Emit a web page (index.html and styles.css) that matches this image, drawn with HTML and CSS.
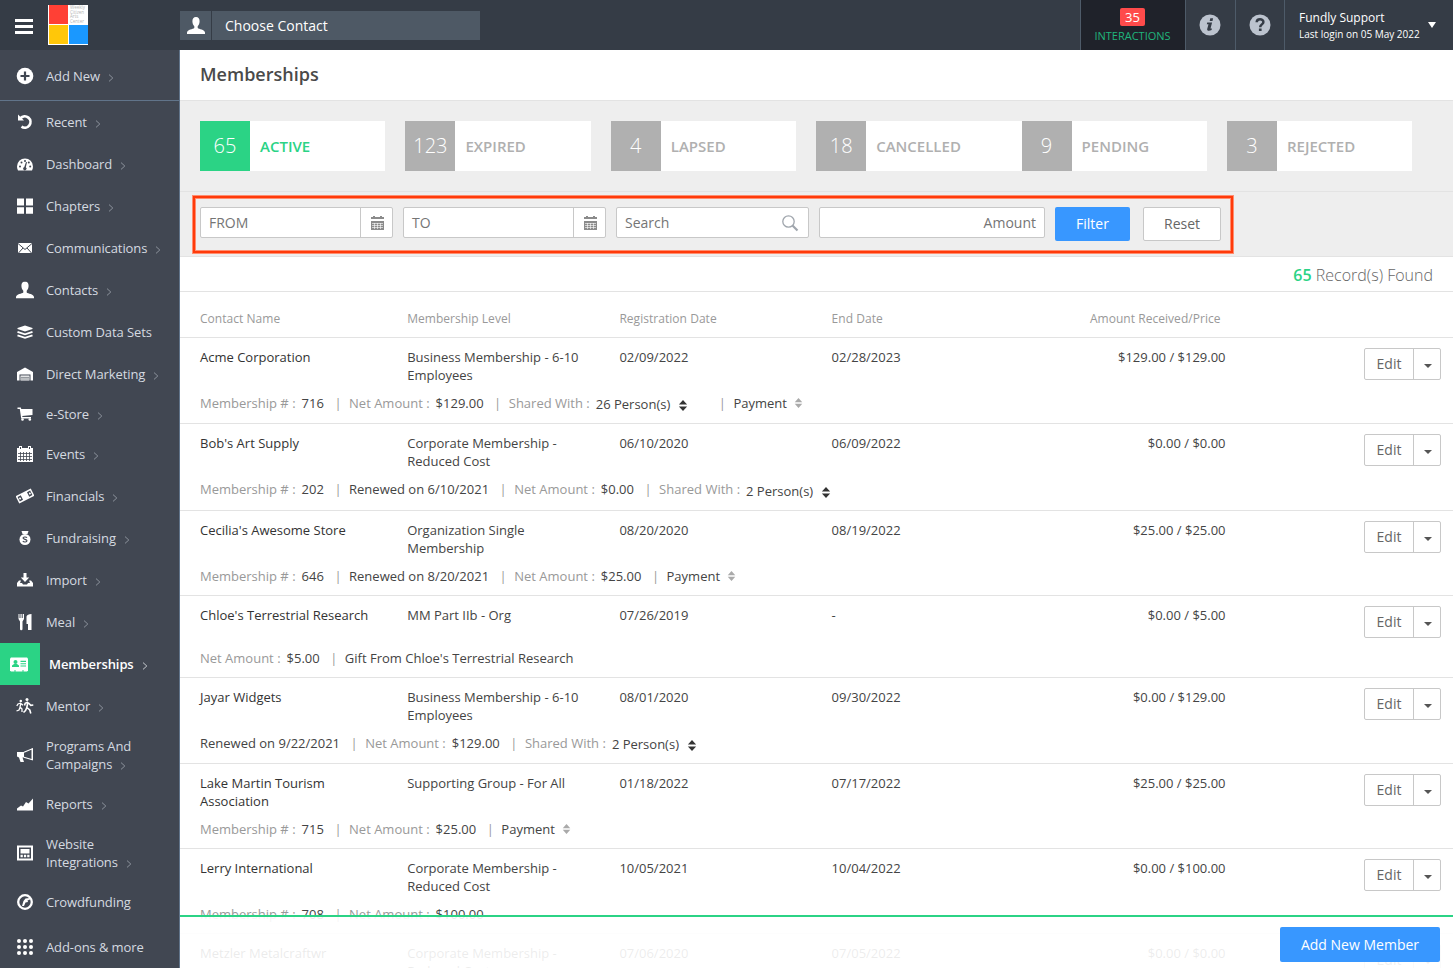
FILE: index.html
```html
<!DOCTYPE html>
<html lang="en">
<head>
    <meta charset="UTF-8">
    <meta name="viewport" content="width=device-width, initial-scale=1.0">
    <title>Memberships</title>
    <link rel="stylesheet" href="styles.css">
</head>
<body>
    <!-- shared icons -->
    <svg class="defs" width="0" height="0">
        <symbol id="person" viewBox="0 0 18 17"><path d="M9 0c2.500 0 3.600 1.700 3.600 4.200 0 2.200-.8 4-1.900 5v1.900c1.200 1.100 7 1.700 7.300 4.400V17H0v-1.500c.3-2.700 6.100-3.300 7.300-4.400V9.200C6.200 8.200 5.400 6.400 5.400 4.200 5.400 1.700 6.500 0 9 0z"/></symbol>
        <symbol id="arrow" viewBox="0 0 6 8"><path d="M1 .6L4.800 4 1 7.400" fill="none" stroke="currentColor"/></symbol>
        <symbol id="calendar" viewBox="0 0 13 14"><path d="M2 0h2v1h5V0h2v1h2v2H0V1h2zM0 5h13v9H0z"/><path d="M1 7.500h11M1 9.500h11M1 11.500h11M3.500 7v6M6.500 7v6M9.500 7v6" stroke="#fff" stroke-width=".6"/></symbol>
        <symbol id="sort" viewBox="0 0 10 12"><path d="M5 0l4.500 5h-9zM5 12L.5 7h9z"/></symbol>
    </svg>

    <header class="topbar">
        <div class="menu"><span></span><span></span><span></span></div>
        <div class="logo">
            <div class="red"></div>
            <div class="logo-text">Weekly<br>Citizen<br>Arts<br>Center</div>
            <div class="yellow"></div>
            <div class="blue"></div>
        </div>
        <div class="choose">
            <div class="choose-icon"><svg width="18" height="17"><use href="#person"/></svg></div>
            <div class="choose-text">Choose Contact</div>
        </div>
        <div class="top-right">
            <div class="interactions"><span class="badge">35</span><span>INTERACTIONS</span></div>
            <div class="top-icon"><svg width="22" height="22" viewBox="0 0 22 22"><circle cx="11" cy="11" r="10.500" fill="#bcc3ce"/><path d="M11.300 4.200h2.800l-.6 2.700h-2.800zM8.200 8.600h4.900l-1.600 6h1.400l-.3 1.500c-2 1.100-5 1.200-4.400-1l1.300-4.800H7.800z" fill="#353c46"/></svg></div>
            <div class="top-icon help"><svg width="22" height="22" viewBox="0 0 22 22"><circle cx="11" cy="11" r="10.500" fill="#bcc3ce"/><path d="M7.700 8.300c0-4 6.700-3.900 6.700-.3 0 2.500-3.200 2.300-3.200 5.200" fill="none" stroke="#353c46" stroke-width="2.500"/><path d="M9.900 14.500h2.700v2.500H9.900z" fill="#353c46"/></svg></div>
            <div class="user">
                <div><div class="user-name">Fundly Support</div><div class="user-login">Last login on 05 May 2022</div></div>
                <svg width="8" height="6"><path d="M0 0h8L4 6z"/></svg>
            </div>
        </div>
    </header>

    <div class="layout">
        <nav class="sidebar">
            <a class="item add"><svg class="icon" viewBox="0 0 18 18"><circle cx="9" cy="9" r="8.300"/><path d="M9 4.500v9M4.500 9h9" stroke="#414752" stroke-width="2.200"/></svg><span>Add New<svg class="arrow"><use href="#arrow"/></svg></span></a>
            <a class="item"><svg class="icon" viewBox="0 0 18 18"><path d="M4.500 5.200A5.700 5.700 0 1 1 5.500 13.700" fill="none" stroke="#fff" stroke-width="2.700"/><path d="M2 1.500v6h6z"/></svg><span>Recent<svg class="arrow"><use href="#arrow"/></svg></span></a>
            <a class="item"><svg class="icon" viewBox="0 0 18 18"><path d="M1 11.500a8 8 0 0 1 16 0c0 1.500-.3 2.700-1 4H2c-.7-1.300-1-2.500-1-4z"/><g fill="#414752"><circle cx="4" cy="11.500" r="1"/><circle cx="5.500" cy="7.500" r="1"/><circle cx="9" cy="6" r="1"/><circle cx="12.800" cy="7.500" r="1"/><circle cx="14.200" cy="11.500" r="1"/><path d="M10 7l1 .2-1.200 5a1.700 1.700 0 1 1-1.500-.2z"/></g></svg><span>Dashboard<svg class="arrow"><use href="#arrow"/></svg></span></a>
            <a class="item"><svg class="icon" viewBox="0 0 18 18"><path d="M1 1.500h7v7H1zM10 1.500h7v7h-7zM1 10.300h7v6.500H1zM10 10.300h7v6.500h-7z"/></svg><span>Chapters<svg class="arrow"><use href="#arrow"/></svg></span></a>
            <a class="item"><svg class="icon" viewBox="0 0 18 18"><path d="M2 4h14v10H2z"/><path d="M2 4.500l7 6 7-6M2.500 14l4.500-5M15.500 14L11 9" fill="none" stroke="#414752"/></svg><span>Communications<svg class="arrow"><use href="#arrow"/></svg></span></a>
            <a class="item"><svg class="icon" viewBox="0 0 18 17"><use href="#person"/></svg><span>Contacts<svg class="arrow"><use href="#arrow"/></svg></span></a>
            <a class="item"><svg class="icon" viewBox="0 0 18 18"><path d="M9 2.500l7.500 2.500v1L9 8.500 1.500 6V5z"/><path d="M1.500 8.800L9 11.300l7.500-2.500M1.500 12.300L9 14.800l7.500-2.500" fill="none" stroke="#fff" stroke-width="1.900"/></svg><span>Custom Data Sets</span></a>
            <a class="item"><svg class="icon" viewBox="0 0 18 18"><path d="M9 2.500L17 7v8.500h-2.500v-6h-11v6H1V7z"/><path d="M4.500 10.500h9v5h-9z"/><path d="M5 12.300h8M5 14h8" stroke="#414752" stroke-width=".7"/></svg><span>Direct Marketing<svg class="arrow"><use href="#arrow"/></svg></span></a>
            <a class="item store"><svg class="icon" viewBox="0 0 18 18"><path d="M1.500 2.500h3.300l.5 1.500h11.200v6L6.200 11l.3 1H15v1.500H5.200L3.800 4H1.500z"/><circle cx="6.500" cy="14.500" r="1.300"/><circle cx="13.800" cy="14.500" r="1.300"/></svg><span>e-Store<svg class="arrow"><use href="#arrow"/></svg></span></a>
            <a class="item"><svg class="icon" viewBox="0 0 18 18"><path d="M1 3h2V1h3v2h6V1h3v2h2v14H1z"/><path d="M2 8.500h14M2 11.500h14M2 14.500h14M4.500 7v9M7.500 7v9M10.500 7v9M13.500 7v9" stroke="#414752" stroke-width=".8"/><path d="M4.500 2v2M13.500 2v2" stroke="#414752"/></svg><span>Events<svg class="arrow"><use href="#arrow"/></svg></span></a>
            <a class="item"><svg class="icon" viewBox="0 0 18 18"><g transform="rotate(-27 9 9)"><path d="M.5 5h17v8H.5z"/><path d="M2 6.500h3.500v5H2zM12.500 6.500H16v5h-3.500z" fill="#414752"/><circle cx="3.500" cy="9" r="1"/><circle cx="14.500" cy="9" r="1"/></g></svg><span>Financials<svg class="arrow"><use href="#arrow"/></svg></span></a>
            <a class="item"><svg class="icon" viewBox="0 0 18 18"><path d="M5.500 2h7L11.500 5h-5z"/><circle cx="9" cy="10.500" r="5.500"/><path d="M11 8.700c-.8-1-4-1-4 .4 0 1.700 4 .8 4 2.700 0 1.400-3.200 1.500-4.200.3" fill="none" stroke="#414752" stroke-width="1.100"/></svg><span>Fundraising<svg class="arrow"><use href="#arrow"/></svg></span></a>
            <a class="item"><svg class="icon" viewBox="0 0 18 18"><path d="M7.500 2h3v4.500h2.700L9 11 4.800 6.500h2.700z"/><path d="M3 9.500L1 12v3.500h16V12l-2-2.500h-2l1 2.500h-2l-1 1.500H7L6 12H4l1-2.500z"/></svg><span>Import<svg class="arrow"><use href="#arrow"/></svg></span></a>
            <a class="item"><svg class="icon" viewBox="0 0 18 18"><path d="M2.500 1h1v4h1V1h1.200v4h1V1H8v5L6.500 8.500V16a1 1 0 0 1-2.500 0V8.500L2.500 6zM15.500 1v16H12v-6h-1.500V3.500C11 2 12.500 1 15.500 1z"/></svg><span>Meal<svg class="arrow"><use href="#arrow"/></svg></span></a>
            <a class="item active"><span class="active-box"><svg width="18" height="15" viewBox="0 0 18 15"><path d="M1 .5h16l1 1v12l-1 1H1l-1-1v-12z"/><g fill="#2bd385"><circle cx="5.500" cy="5" r="2"/><path d="M2 10V8.500L4 7h3l2 1.500V10zM10.500 3.700H16V5h-5.500zM10.500 6.200H16v1h-5.500zM10.500 8.500H16v1h-5.500zM4 13.500h2v1H4zM12 13.500h2v1h-2z"/></g></svg></span><span>Memberships<svg class="arrow"><use href="#arrow"/></svg></span></a>
            <a class="item"><svg class="icon" viewBox="0 0 18 18"><circle cx="4.800" cy="4" r="1.300"/><circle cx="11" cy="2.500" r="1.500"/><path d="M5 6L4 10l2 2v3M4 10.500L3 13 .5 14M5 6L2 7 .8 9M5 6.500L7 8.200" fill="none" stroke="#fff" stroke-width="1.300"/><path d="M12 5l-1.200 5.500 3 2.500 1 3.500M10.800 10.500l-1.300 3-2 2M12 5L9.200 6.300 8.500 8.500M12.500 6l2.300 2.300L17.300 8" fill="none" stroke="#fff" stroke-width="1.600"/></svg><span>Mentor<svg class="arrow"><use href="#arrow"/></svg></span></a>
            <a class="item two"><svg class="icon" viewBox="0 0 18 18"><path d="M1 6h7v5.500H6.500L8 16H4.500L3 11.500 1 10.500z"/><path d="M8 6.300l8.300-3.500v11L8 11.200" fill="none" stroke="#fff" stroke-width="1.200"/><path d="M15.700 2.500H17v11.500h-1.300z"/></svg><span>Programs And<br>Campaigns<svg class="arrow"><use href="#arrow"/></svg></span></a>
            <a class="item"><svg class="icon" viewBox="0 0 18 18"><path d="M1 15.500v-2l4-3 2 1 3-4.500 2.500 1.500L17 3.500v12z"/></svg><span>Reports<svg class="arrow"><use href="#arrow"/></svg></span></a>
            <a class="item two"><svg class="icon" viewBox="0 0 18 18"><path d="M1 1.500h16v15H1z"/><path d="M3 3.500h12v11H3z" fill="#414752"/><path d="M4.500 5h9v4.500h-9zM4.500 10.800h2.300v2.400H4.500zM7.900 10.800h2.300v2.400H7.900zM11.200 10.800h2.300v2.400h-2.300z"/></svg><span>Website<br>Integrations<svg class="arrow"><use href="#arrow"/></svg></span></a>
            <a class="item"><svg class="icon" viewBox="0 0 18 18"><circle cx="9" cy="9" r="6.800" fill="none" stroke="#fff" stroke-width="2.300"/><path d="M6 13l1.500-5 2-2.500L14 5v1.500l-2.500 1 .5 1.500-2.500.5L8 13z"/></svg><span>Crowdfunding</span></a>
            <a class="item addons"><svg class="icon" viewBox="0 0 18 18"><g id="dots"><circle cx="3" cy="3" r="2"/><circle cx="9" cy="3" r="2"/><circle cx="15" cy="3" r="2"/></g><use href="#dots" y="6"/><use href="#dots" y="12"/></svg><span>Add-ons &amp; more</span></a>
        </nav>

        <main class="content">
            <h1>Memberships</h1>

            <section class="stats">
                <div class="stat active"><b>65</b><span>ACTIVE</span></div>
                <div class="stat"><b>123</b><span>EXPIRED</span></div>
                <div class="stat"><b>4</b><span>LAPSED</span></div>
                <div class="stat wide"><b>18</b><span>CANCELLED</span></div>
                <div class="stat"><b>9</b><span>PENDING</span></div>
                <div class="stat"><b>3</b><span>REJECTED</span></div>
            </section>

            <section class="filters">
                <div class="field from"><span>FROM</span><i><svg width="13" height="14"><use href="#calendar"/></svg></i></div>
                <div class="field to"><span>TO</span><i><svg width="13" height="14"><use href="#calendar"/></svg></i></div>
                <div class="field search"><span>Search</span><svg width="17" height="17" viewBox="0 0 17 17"><circle cx="6.500" cy="6.500" r="5.700" fill="none" stroke="#a0a6ad" stroke-width="1.300"/><path d="M10.500 10.500l5 5" stroke="#a0a6ad" stroke-width="2.200"/></svg></div>
                <div class="field amount"><span>Amount</span></div>
                <button class="btn blue-btn">Filter</button>
                <button class="btn reset">Reset</button>
                <div class="highlight"></div>
            </section>

            <div class="records"><b>65</b> Record(s) Found</div>

            <div class="columns head">
                <div>Contact Name</div><div>Membership Level</div><div>Registration Date</div><div>End Date</div><div class="money">Amount Received/Price</div>
            </div>

            <div class="row">
                <div class="columns"><div class="name">Acme Corporation</div><div>Business Membership - 6-10 Employees</div><div>02/09/2022</div><div>02/28/2023</div><div class="money">$129.00 / $129.00</div><div class="edit"><span>Edit</span><i></i></div></div>
                <div class="meta"><span><em>Membership # :</em>716</span><span><em>Net Amount :</em>$129.00</span><span class="shared first"><em>Shared With :</em><u>26 Person(s)<svg class="sort"><use href="#sort"/></svg></u></span><span>Payment<svg class="sort light"><use href="#sort"/></svg></span></div>
            </div>
            <div class="row">
                <div class="columns"><div class="name">Bob's Art Supply</div><div>Corporate Membership - Reduced Cost</div><div>06/10/2020</div><div>06/09/2022</div><div class="money">$0.00 / $0.00</div><div class="edit"><span>Edit</span><i></i></div></div>
                <div class="meta"><span><em>Membership # :</em>202</span><span>Renewed on 6/10/2021</span><span><em>Net Amount :</em>$0.00</span><span class="shared low"><em>Shared With :</em><u>2 Person(s)<svg class="sort"><use href="#sort"/></svg></u></span></div>
            </div>
            <div class="row">
                <div class="columns"><div class="name">Cecilia's Awesome Store</div><div>Organization Single Membership</div><div>08/20/2020</div><div>08/19/2022</div><div class="money">$25.00 / $25.00</div><div class="edit"><span>Edit</span><i></i></div></div>
                <div class="meta"><span><em>Membership # :</em>646</span><span>Renewed on 8/20/2021</span><span><em>Net Amount :</em>$25.00</span><span>Payment<svg class="sort light"><use href="#sort"/></svg></span></div>
            </div>
            <div class="row">
                <div class="columns"><div class="name">Chloe's Terrestrial Research</div><div>MM Part IIb - Org</div><div>07/26/2019</div><div>-</div><div class="money">$0.00 / $5.00</div><div class="edit"><span>Edit</span><i></i></div></div>
                <div class="meta"><span><em>Net Amount :</em>$5.00</span><span>Gift From Chloe's Terrestrial Research</span></div>
            </div>
            <div class="row">
                <div class="columns"><div class="name">Jayar Widgets</div><div>Business Membership - 6-10 Employees</div><div>08/01/2020</div><div>09/30/2022</div><div class="money">$0.00 / $129.00</div><div class="edit"><span>Edit</span><i></i></div></div>
                <div class="meta"><span>Renewed on 9/22/2021</span><span><em>Net Amount :</em>$129.00</span><span class="shared"><em>Shared With :</em><u>2 Person(s)<svg class="sort"><use href="#sort"/></svg></u></span></div>
            </div>
            <div class="row">
                <div class="columns"><div class="name">Lake Martin Tourism Association</div><div>Supporting Group - For All</div><div>01/18/2022</div><div>07/17/2022</div><div class="money">$25.00 / $25.00</div><div class="edit"><span>Edit</span><i></i></div></div>
                <div class="meta"><span><em>Membership # :</em>715</span><span><em>Net Amount :</em>$25.00</span><span>Payment<svg class="sort light"><use href="#sort"/></svg></span></div>
            </div>
            <div class="row">
                <div class="columns"><div class="name">Lerry International</div><div>Corporate Membership - Reduced Cost</div><div>10/05/2021</div><div>10/04/2022</div><div class="money">$0.00 / $100.00</div><div class="edit"><span>Edit</span><i></i></div></div>
                <div class="meta"><span><em>Membership # :</em>708</span><span><em>Net Amount :</em>$100.00</span></div>
            </div>
            <div class="row">
                <div class="columns"><div class="name">Metzler Metalcraftwr</div><div>Corporate Membership - Reduced Cost</div><div>07/06/2020</div><div>07/05/2022</div><div class="money">$0.00 / $0.00</div><div class="edit"><span>Edit</span><i></i></div></div>
            </div>

            <footer class="bottom"><button class="btn blue-btn add-member">Add New Member</button></footer>
        </main>
    </div>
</body>
</html>
```
FILE: styles.css
```css
* {
    box-sizing: border-box;
}
body {
    margin: 0;
    height: 968px;
    overflow: hidden;
    font-family: "Open Sans", sans-serif;
    font-size: 13px;
    line-height: 18px;
    color: #444;
    background: #fff;
}
.defs {
    position: absolute;
}
svg {
    flex-shrink: 0;
}
.topbar {
    display: flex;
    align-items: center;
    height: 50px;
    background: #353c46;
    color: #fff;
}
.menu {
    display: flex;
    flex-direction: column;
    gap: 3px;
    width: 18px;
    margin: 3px 15px 0;
}
.menu span {
    height: 3px;
    background: #fff;
}
.logo {
    display: grid;
    grid-template-columns: 19px 19px;
    grid-template-rows: 19px 19px;
    gap: 1px;
    width: 40px;
    height: 40px;
    background: #fff;
    padding: 0 0 0 1px;
}
.red {
    background: #ff4035;
}
.yellow {
    background: #ffc709;
}
.blue {
    background: #1a98ff;
}
.logo-text {
    font-size: 4.5px;
    line-height: 4.7px;
    color: #b5b5b5;
    padding-left: 1px;
}
.choose {
    display: flex;
    gap: 1px;
    width: 300px;
    height: 29px;
    margin: 1px 0 0 92px;
}
.choose-icon {
    display: flex;
    align-items: center;
    justify-content: center;
    width: 31px;
    background: #4e5965;
    fill: #fff;
}
.choose-text {
    flex: 1;
    padding-left: 13px;
    line-height: 30px;
    font-size: 14px;
    background: #4e5965;
}
.top-right {
    display: flex;
    height: 50px;
    margin-left: auto;
}
.interactions {
    display: flex;
    flex-direction: column;
    align-items: center;
    width: 106px;
    padding: 8px 1px 0 0;
    background: #1f222a;
    border-left: 1px solid #4e5b69;
    border-right: 1px solid #4e5b69;
    font-size: 11px;
    line-height: 20px;
    color: #1fb57c;
}
.badge {
    width: 25px;
    height: 18px;
    line-height: 18px;
    font-size: 13px;
    text-align: center;
    color: #fff;
    background: #ff4b4b;
    border-radius: 2px;
}
.top-icon {
    display: flex;
    align-items: center;
    justify-content: center;
    width: 50px;
    padding-right: 1px;
    border-right: 1px solid #4e5b69;
}
.help {
    width: 49px;
    padding-right: 0;
}
.user {
    display: flex;
    align-items: center;
    gap: 8px;
    width: 168px;
    padding: 2px 0 0 14px;
    fill: #fff;
}
.user > svg {
    margin-top: -3px;
}
.user-name {
    font-size: 12px;
    line-height: 16px;
}
.user-login {
    font-size: 10px;
    line-height: 16px;
    white-space: nowrap;
}
.layout {
    display: flex;
    height: 918px;
}
.sidebar {
    width: 180px;
    flex-shrink: 0;
    background: #414752;
    border-right: 1px solid #61748a;
    overflow: hidden;
}
.item {
    display: flex;
    align-items: center;
    gap: 12px;
    height: 42px;
    padding-left: 16px;
    letter-spacing: -.1px;
    color: #d5dae0;
}
.item.add {
    height: 51px;
    padding-top: 2px;
    border-bottom: 1px solid #61748a;
}
.item.store {
    height: 38px;
}
.item.two {
    height: 56px;
}
.item.addons {
    height: 48px;
}
.icon {
    width: 18px;
    height: 18px;
    fill: #fff;
}
.arrow {
    width: 6px;
    height: 8px;
    margin-left: 8px;
    margin-bottom: -1px;
    color: #8b929b;
}
.item.active {
    gap: 9px;
    padding-left: 0;
    font-weight: 600;
    color: #fff;
}
.item.active .arrow {
    color: #c5c9ce;
}
.active-box {
    display: flex;
    align-items: center;
    width: 40px;
    height: 42px;
    padding-left: 10px;
    background: #2bd385;
    fill: #fff;
}
.content {
    position: relative;
    flex: 1;
    min-width: 0;
    overflow: hidden;
}
h1 {
    margin: 0;
    height: 51px;
    padding-left: 20px;
    border-bottom: 1px solid #e3e3e3;
    font-size: 18px;
    line-height: 49px;
    font-weight: 600;
    color: #4a4a4a;
}
.stats {
    display: grid;
    grid-template-columns: repeat(6, 205.400px);
    height: 91px;
    padding: 20px 0 0 20px;
    background: #eee;
    border-bottom: 1px solid #e3e3e3;
}
.stat {
    display: flex;
    width: 185.400px;
    height: 50px;
    background: #fff;
    color: #b0b0b0;
    font-size: 15px;
    font-weight: 600;
    line-height: 50px;
}
.stat.wide {
    width: 100%;
}
.stat b {
    width: 50px;
    margin-right: 10px;
    text-align: center;
    font-size: 20px;
    line-height: 50px;
    font-weight: 300;
    color: #fff;
    background: #b0b0b0;
}
.stat.active {
    color: #2bd385;
}
.stat.active b {
    background: #2bd385;
}
.filters {
    position: relative;
    display: flex;
    gap: 10px;
    height: 65px;
    padding: 15px 0 0 20px;
    background: #eee;
    border-bottom: 1px solid #e3e3e3;
}
/* marker drawn over the filter bar */
.highlight {
    position: absolute;
    left: 13px;
    top: 4px;
    width: 1040px;
    height: 57px;
    border: 2px solid #ff3a0a;
    box-shadow: 0 0 0 1px #ff8d70, inset 0 0 0 1px #ff8d70;
}
.field {
    display: flex;
    align-items: center;
    justify-content: space-between;
    width: 193px;
    height: 31px;
    padding-left: 8px;
    background: #fff;
    border: 1px solid #c8c8c8;
    border-radius: 2px;
    font-size: 14px;
    color: #757575;
}
.field.to {
    width: 203px;
}
.field i {
    display: flex;
    align-items: center;
    justify-content: center;
    width: 32px;
    height: 29px;
    padding: 1px 0 0 2px;
    border-left: 1px solid #c8c8c8;
    fill: #8b8b8b;
}
.field.search {
    padding-right: 9px;
}
.field.search svg {
    margin-top: 1px;
}
.field.amount {
    justify-content: flex-end;
    width: 226px;
    padding-right: 8px;
}
.btn {
    width: 75px;
    height: 34px;
    padding: 0 0 2px;
    border: none;
    border-radius: 2px;
    font-family: inherit;
    font-size: 14px;
}
.blue-btn {
    background: #3897ff;
    color: #fff;
}
.reset {
    width: 78px;
    margin-left: 3px;
    background: #fff;
    border: 1px solid #c8c8c8;
    color: #666;
}
.records {
    height: 35px;
    padding-right: 20px;
    border-bottom: 1px solid #e3e3e3;
    text-align: right;
    font-size: 16px;
    line-height: 36px;
    font-weight: 300;
    color: #666;
}
.records b {
    font-weight: 600;
    color: #2bd385;
}
.columns {
    display: grid;
    grid-template-columns: 207.200px 212.200px 212.200px 212px 182px 1fr;
    min-height: 33px;
    padding: 0 12px 0 20px;
}
.columns > div {
    padding-right: 20px;
}
.columns .money {
    padding-right: 0;
    text-align: right;
}
.head {
    height: 46px;
    padding-top: 18px;
    border-bottom: 1px solid #e3e3e3;
    font-size: 12px;
    letter-spacing: .04px;
    color: #999;
}
.head .money {
    padding-right: 5px;
}
.row {
    padding: 10px 0;
    border-bottom: 1px solid #e3e3e3;
}
.name {
    color: #333;
}
.columns > .edit {
    display: flex;
    justify-self: end;
    width: 77px;
    height: 32px;
    padding: 0;
    border: 1px solid #c8c8c8;
    border-radius: 2px;
    font-size: 14px;
    line-height: 30px;
    color: #666;
}
.edit span {
    width: 49px;
    text-align: center;
    border-right: 1px solid #c8c8c8;
}
.edit i {
    margin: 15px 0 0 10px;
    width: 8px;
    height: 4px;
    background: #555;
    clip-path: polygon(0 0, 100% 0, 50% 100%);
}
.meta {
    display: flex;
    margin-top: 10px;
    padding-left: 20px;
}
.meta > span {
    display: flex;
}
.meta > span + span::before {
    content: "|";
    margin: 0 7.500px 0 10.500px;
    color: #999;
}
.meta em {
    margin-right: 6px;
    font-style: normal;
    color: #999;
}
.meta u {
    padding-top: 1px;
    text-decoration: none;
}
.low u {
    padding-top: 2px;
}
.first {
    margin-right: 20px;
}
.sort {
    width: 10px;
    height: 11px;
    margin-left: 8px;
    vertical-align: -2px;
    fill: #333;
}
.sort.light {
    width: 9px;
    height: 10px;
    margin: 4px 0 0 7px;
    fill: #aaa;
}
.bottom {
    position: absolute;
    left: 0;
    right: 0;
    bottom: 0;
    display: flex;
    justify-content: flex-end;
    height: 53px;
    padding: 10px 13px 0 0;
    border-top: 2px solid #2bd385;
    background: rgba(255, 255, 255, .9);
}
.add-member {
    width: 160px;
    height: 35px;
    padding: 0;
}
```
